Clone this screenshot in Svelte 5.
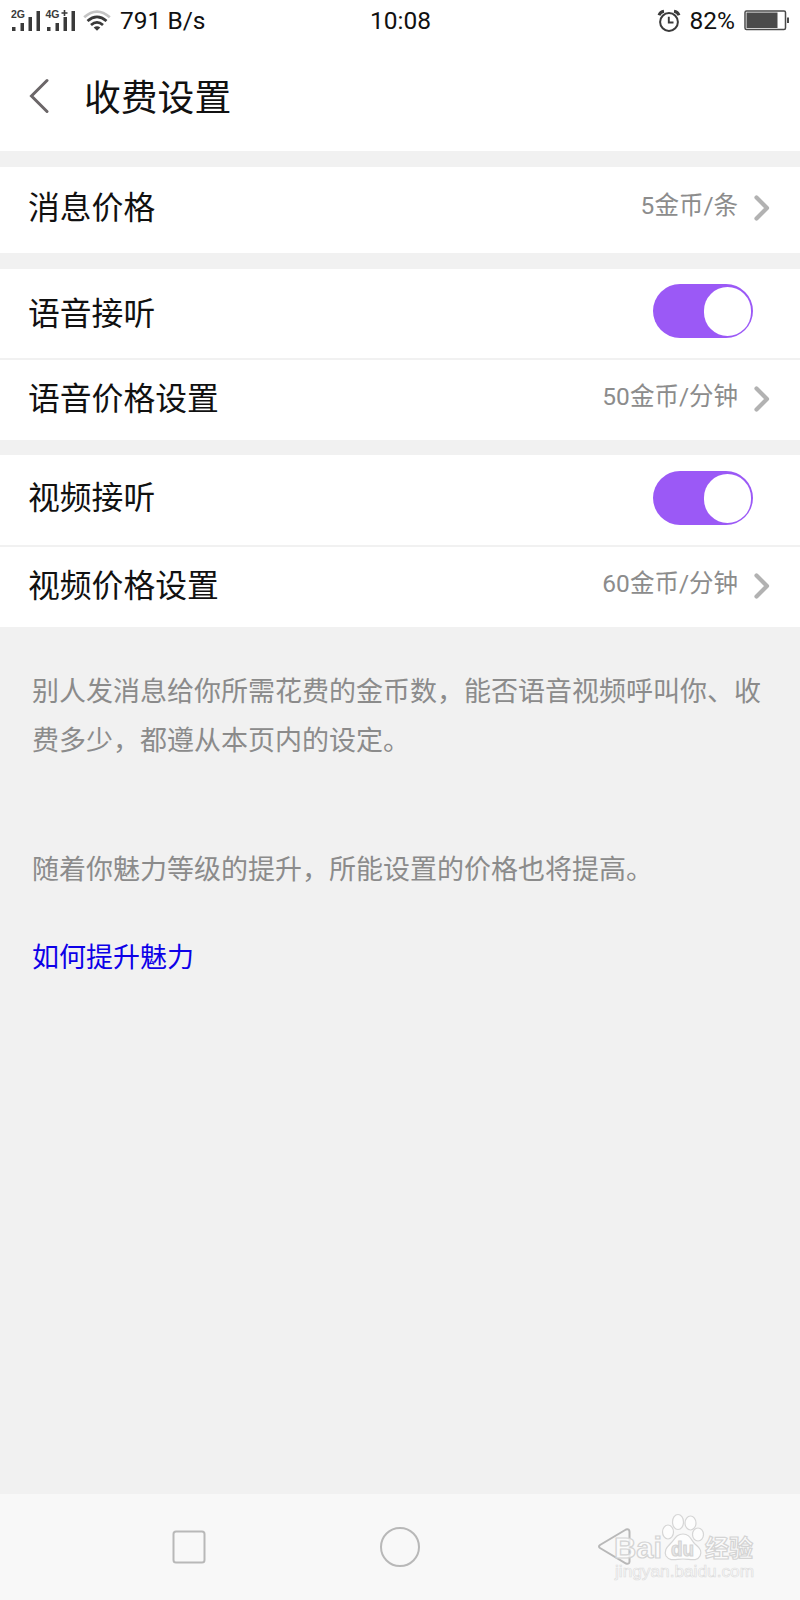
<script>
	let voiceOn = true;
	let videoOn = true;

	const messagePrice = '5金币/条';
	const voicePrice = '50金币/分钟';
	const videoPrice = '60金币/分钟';
</script>

<div class="screen">
	<div class="status">
		<div class="status-left">
			<svg width="66" height="24" viewBox="0 0 66 24">
				<g fill="#3a3a3a">
					<text x="0" y="9" class="net">2G</text>
					<rect x="1" y="18" width="3.5" height="4" />
					<rect x="9.500" y="14" width="3.5" height="8" />
					<rect x="17.500" y="8" width="3.5" height="14" />
					<rect x="25.500" y="2" width="3.5" height="20" />
					<text x="34.500" y="9" class="net">4G</text>
					<path d="M50.5 4h6M53.5 1v6" stroke="#3a3a3a" stroke-width="1.6" />
					<rect x="36" y="18" width="3.5" height="4" />
					<rect x="44.500" y="14" width="3.5" height="8" />
					<rect x="52.500" y="8" width="3.5" height="14" />
					<rect x="60.500" y="2" width="3.5" height="20" />
				</g>
			</svg>
			<svg class="wifi" width="28" height="22" viewBox="0 0 28 22" fill="none" stroke-width="2.8">
				<path d="M1.2 7.2Q14-4 26.8 7.2" stroke="#c4c4c4" />
				<path d="M4.5 11Q14 2.8 23.5 11" stroke="#3a3a3a" />
				<path d="M8 15Q14 9.8 20 15" stroke="#3a3a3a" />
				<path d="M10.7 17.6Q14 14.9 17.3 17.6L14 20.8z" fill="#3a3a3a" />
			</svg>
			<span>791 B/s</span>
		</div>
		<div class="status-time">10:08</div>
		<div class="status-right">
			<svg width="24" height="24" viewBox="0 0 24 24" fill="none" stroke="#3a3a3a">
				<circle cx="12" cy="13" r="8.9" stroke-width="2" />
				<path d="M11.8 7.8v5.7h4.7" stroke-width="1.9" />
				<path d="M2 6.2Q3.3 2.8 7 2.2M22 6.2Q20.7 2.8 17 2.2" stroke-width="3" />
			</svg>
			<span>82%</span>
			<svg width="46" height="21" viewBox="0 0 46 21">
				<rect x="1" y="1" width="40.5" height="18.5" rx="1.5" fill="#fff" stroke="#4a4a4a" stroke-width="1.5" />
				<rect x="2.5" y="2.5" width="31" height="15.5" fill="#4a4a4a" />
				<rect x="43" y="7.5" width="2" height="5.5" fill="#4a4a4a" />
			</svg>
		</div>
	</div>

	<header>
		<svg width="20" height="36" viewBox="0 0 20 36">
			<path d="M18 2.5L2.500 18 18 33.5" fill="none" stroke="#6b6668" stroke-width="3" stroke-linecap="round" />
		</svg>
		<h1>收费设置</h1>
	</header>

	<section>
		<div class="row message">
			<span class="label">消息价格</span>
			<span class="value">{messagePrice}</span>
			<svg class="arrow" width="16" height="26" viewBox="0 0 16 26"><path d="M2.5 2.5L13 13 2.5 23.5" /></svg>
		</div>
	</section>

	<section>
		<div class="row toggle-row first">
			<span class="label">语音接听</span>
			<button class="toggle" class:on={voiceOn} aria-label="语音接听" on:click={() => (voiceOn = !voiceOn)}>
				<i></i>
			</button>
		</div>
		<div class="row price">
			<span class="label">语音价格设置</span>
			<span class="value">{voicePrice}</span>
			<svg class="arrow" width="16" height="26" viewBox="0 0 16 26"><path d="M2.5 2.5L13 13 2.5 23.5" /></svg>
		</div>
	</section>

	<section>
		<div class="row toggle-row second">
			<span class="label">视频接听</span>
			<button class="toggle" class:on={videoOn} aria-label="视频接听" on:click={() => (videoOn = !videoOn)}>
				<i></i>
			</button>
		</div>
		<div class="row price">
			<span class="label">视频价格设置</span>
			<span class="value">{videoPrice}</span>
			<svg class="arrow" width="16" height="26" viewBox="0 0 16 26"><path d="M2.5 2.5L13 13 2.5 23.5" /></svg>
		</div>
	</section>

	<div class="tips">
		<p>别人发消息给你所需花费的金币数，能否语音视频呼叫你、收费多少，都遵从本页内的设定。</p>
		<p class="level">随着你魅力等级的提升，所能设置的价格也将提高。</p>
		<span class="link">如何提升魅力</span>
	</div>

	<nav>
		<svg width="34" height="34" viewBox="0 0 34 34">
			<rect x="1.5" y="1.5" width="31" height="31" rx="2.5" />
		</svg>
		<svg class="home" width="42" height="42" viewBox="0 0 42 42">
			<circle cx="21" cy="21" r="19" />
		</svg>
		<svg width="36" height="40" viewBox="0 0 36 40">
			<path d="M29 2.500L3 18q-2 1.500 0 3l26 15.500q3.500 1 3.500-2V5q0-3.500-3.500-2.500z" />
		</svg>
	</nav>

	<svg class="watermark" width="150" height="76" viewBox="0 0 150 76">
		<g fill="#fdfdfd" stroke="#d6d6d6" stroke-width="1.2">
			<ellipse cx="58" cy="21" rx="5.5" ry="7" />
			<ellipse cx="68" cy="11" rx="5.5" ry="7.5" />
			<ellipse cx="80.500" cy="12" rx="5.5" ry="7" />
			<ellipse cx="88" cy="23.500" rx="5.5" ry="6.5" />
			<path d="M73 23c7 0 8 6 12 10 6 5 7 8 5 12-3 6-10 3-17 3s-13 3-17-3c-2-5 0-8 5-13 4-4 5-9 12-9z" />
		</g>
		<g class="outline">
			<text x="4" y="47" class="brand" textLength="48" lengthAdjust="spacingAndGlyphs">Bai</text>
			<text x="61" y="44.5" class="du" textLength="23" lengthAdjust="spacingAndGlyphs">du</text>
			<text x="95" y="45.5" class="cn">经验</text>
		</g>
		<text x="5" y="66" class="site" textLength="139" lengthAdjust="spacingAndGlyphs">jingyan.baidu.com</text>
	</svg>
</div>

<style>
	:global(body) {
		background: #f1f1f1;
	}

	.screen {
		position: relative;
		display: flex;
		flex-direction: column;
		width: 800px;
		height: 1600px;
		overflow: hidden;
		background: #f1f1f1;
		font-family: Roboto, "Noto Sans CJK SC", sans-serif;
		color: #111;
	}

	.status {
		display: grid;
		grid-template-columns: 1fr auto 1fr;
		align-items: center;
		height: 40px;
		box-sizing: border-box;
		padding: 1px 10px 0 11px;
		background: #fff;
		font-size: 24.5px;
		line-height: 39px;
	}

	.status-left,
	.status-right {
		display: flex;
		align-items: center;
	}

	.status-right {
		justify-content: flex-end;
		gap: 9px;
	}

	.wifi {
		margin: 0 9px 0 6px;
	}

	.net {
		font: bold 10.5px "Liberation Sans", sans-serif;
	}

	header {
		display: flex;
		align-items: flex-start;
		gap: 35px;
		height: 111px;
		padding: 38px 29px 0;
		box-sizing: border-box;
		background: #fff;
	}

	h1 {
		margin: 1px 0 0;
		font-size: 36.8px;
		font-weight: 400;
		line-height: 40px;
	}

	section {
		margin-top: 16px;
		background: #fff;
	}

	section:last-of-type {
		margin-top: 15px;
	}

	.row {
		display: flex;
		align-items: center;
		box-sizing: border-box;
		padding: 0 30px 0 28px;
	}

	.message {
		height: 86px;
		padding-bottom: 5px;
	}

	.toggle-row {
		height: 91px;
		padding-right: 47px;
		border-bottom: 2px solid #f1f1f1;
	}

	.second {
		height: 92px;
		padding-bottom: 4px;
	}

	.price {
		height: 80px;
		padding-bottom: 3px;
	}

	.label {
		flex: 1;
		font-size: 31.8px;
		line-height: 40px;
	}

	.value {
		margin: 0 16px 4px 0;
		font-size: 24.5px;
		line-height: 30px;
		color: #8c8c8c;
	}

	.arrow {
		fill: none;
		stroke: #b2b2b2;
		stroke-width: 4.2;
		stroke-linecap: round;
		stroke-linejoin: round;
	}

	.toggle {
		display: flex;
		align-items: center;
		width: 100px;
		height: 54px;
		padding: 0 2px;
		border: none;
		border-radius: 27px;
		background: #ccc;
		cursor: pointer;
	}

	.toggle.on {
		justify-content: flex-end;
		background: #9b59f6;
	}

	.first .toggle {
		margin-bottom: 5px;
	}

	.toggle i {
		width: 47px;
		height: 49px;
		border-radius: 24px;
		background: #fff;
	}

	.tips {
		flex: 1;
		padding: 41px 32px 0;
		font-size: 27px;
		line-height: 49px;
		color: #8b8b8b;
	}

	.tips p {
		margin: 0;
	}

	.tips .level {
		margin: 80px 0 39px;
	}

	.link {
		color: #0d00e8;
	}

	nav {
		display: flex;
		align-items: center;
		height: 106px;
		box-sizing: border-box;
		padding: 0 0 0 172px;
		background: #f8f8f8;
		fill: none;
		stroke: #b8b8b8;
		stroke-width: 2;
	}

	.home {
		margin: 0 176px 0 173px;
	}

	.watermark {
		position: absolute;
		left: 610px;
		top: 1511px;
	}

	.outline text {
		fill: #fdfdfd;
		fill-opacity: 0.75;
		stroke: #d4d4d4;
		stroke-width: 1.2;
	}

	.brand {
		font: bold 29px "Liberation Sans", sans-serif;
	}

	.outline .du {
		font: bold 21px "Liberation Sans", sans-serif;
		fill: #e2e2e2;
	}

	.cn {
		font: bold 24px "Liberation Sans", "Noto Sans CJK SC", sans-serif;
	}

	.site {
		font: 16px "Liberation Sans", sans-serif;
		fill: #fff;
		stroke: #dedede;
		stroke-width: 0.7;
	}
</style>
